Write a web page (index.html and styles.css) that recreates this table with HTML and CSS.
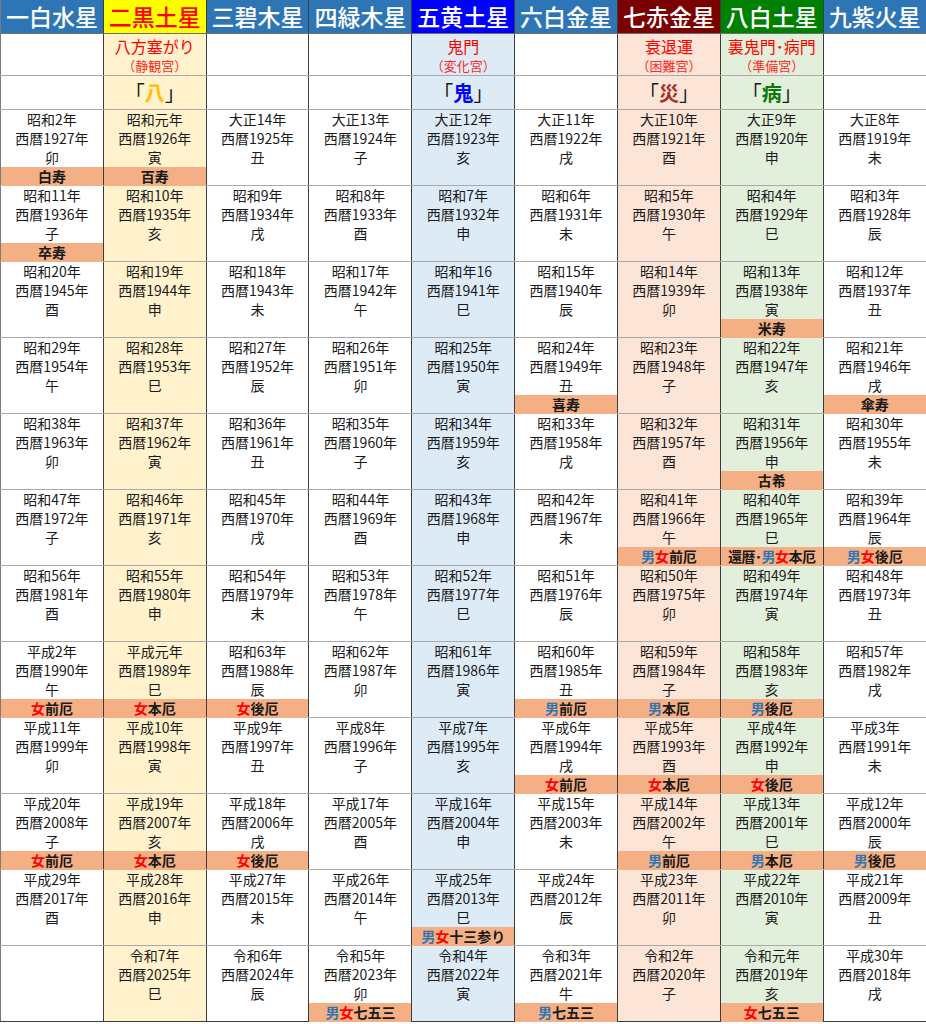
FILE: index.html
```html
<!DOCTYPE html>
<html lang="ja">
<head>
<meta charset="utf-8">
<title>九星早見表</title>
<link rel="stylesheet" href="styles.css">
</head>
<body>
<table class="tbl">
<colgroup><col><col><col><col><col><col><col><col><col></colgroup>
<thead>
<tr class="hrow">
<th class="h"><div class="hc">一白水星</div></th>
<th class="h h2"><div class="hc">二黒土星</div></th>
<th class="h"><div class="hc">三碧木星</div></th>
<th class="h"><div class="hc">四緑木星</div></th>
<th class="h h5"><div class="hc">五黄土星</div></th>
<th class="h"><div class="hc">六白金星</div></th>
<th class="h h7"><div class="hc">七赤金星</div></th>
<th class="h h8"><div class="hc">八白土星</div></th>
<th class="h"><div class="hc">九紫火星</div></th>
</tr>
</thead>
<tbody>
<tr class="lrow">
<td><div class="lc"></div></td>
<td class="c2"><div class="lc"><span class="l1">八方塞がり</span><span class="l2">（静観宮）</span></div></td>
<td><div class="lc"></div></td>
<td><div class="lc"></div></td>
<td class="c5"><div class="lc"><span class="l1">鬼門</span><span class="l2">（変化宮）</span></div></td>
<td><div class="lc"></div></td>
<td class="c7"><div class="lc"><span class="l1">衰退運</span><span class="l2">（困難宮）</span></div></td>
<td class="c8"><div class="lc"><span class="l1">裏鬼門･病門</span><span class="l2">（準備宮）</span></div></td>
<td><div class="lc"></div></td>
</tr>
<tr class="krow">
<td><div class="kc"></div></td>
<td class="c2"><div class="kc">「<b class="k-ha">八</b>」</div></td>
<td><div class="kc"></div></td>
<td><div class="kc"></div></td>
<td class="c5"><div class="kc">「<b class="k-oni">鬼</b>」</div></td>
<td><div class="kc"></div></td>
<td class="c7"><div class="kc">「<b class="k-sai">災</b>」</div></td>
<td class="c8"><div class="kc">「<b class="k-byo">病</b>」</div></td>
<td><div class="kc"></div></td>
</tr>

<tr>
<td><div class="cell"><p>昭和2年<br>西暦1927年<br>卯</p><div class="tag">白寿</div></div></td>
<td class="c2"><div class="cell"><p>昭和元年<br>西暦1926年<br>寅</p><div class="tag">百寿</div></div></td>
<td><div class="cell"><p>大正14年<br>西暦1925年<br>丑</p></div></td>
<td><div class="cell"><p>大正13年<br>西暦1924年<br>子</p></div></td>
<td class="c5"><div class="cell"><p>大正12年<br>西暦1923年<br>亥</p></div></td>
<td><div class="cell"><p>大正11年<br>西暦1922年<br>戌</p></div></td>
<td class="c7"><div class="cell"><p>大正10年<br>西暦1921年<br>酉</p></div></td>
<td class="c8"><div class="cell"><p>大正9年<br>西暦1920年<br>申</p></div></td>
<td><div class="cell"><p>大正8年<br>西暦1919年<br>未</p></div></td>
</tr>

<tr>
<td><div class="cell"><p>昭和11年<br>西暦1936年<br>子</p><div class="tag">卒寿</div></div></td>
<td class="c2"><div class="cell"><p>昭和10年<br>西暦1935年<br>亥</p></div></td>
<td><div class="cell"><p>昭和9年<br>西暦1934年<br>戌</p></div></td>
<td><div class="cell"><p>昭和8年<br>西暦1933年<br>酉</p></div></td>
<td class="c5"><div class="cell"><p>昭和7年<br>西暦1932年<br>申</p></div></td>
<td><div class="cell"><p>昭和6年<br>西暦1931年<br>未</p></div></td>
<td class="c7"><div class="cell"><p>昭和5年<br>西暦1930年<br>午</p></div></td>
<td class="c8"><div class="cell"><p>昭和4年<br>西暦1929年<br>巳</p></div></td>
<td><div class="cell"><p>昭和3年<br>西暦1928年<br>辰</p></div></td>
</tr>

<tr>
<td><div class="cell"><p>昭和20年<br>西暦1945年<br>酉</p></div></td>
<td class="c2"><div class="cell"><p>昭和19年<br>西暦1944年<br>申</p></div></td>
<td><div class="cell"><p>昭和18年<br>西暦1943年<br>未</p></div></td>
<td><div class="cell"><p>昭和17年<br>西暦1942年<br>午</p></div></td>
<td class="c5"><div class="cell"><p>昭和年16<br>西暦1941年<br>巳</p></div></td>
<td><div class="cell"><p>昭和15年<br>西暦1940年<br>辰</p></div></td>
<td class="c7"><div class="cell"><p>昭和14年<br>西暦1939年<br>卯</p></div></td>
<td class="c8"><div class="cell"><p>昭和13年<br>西暦1938年<br>寅</p><div class="tag">米寿</div></div></td>
<td><div class="cell"><p>昭和12年<br>西暦1937年<br>丑</p></div></td>
</tr>

<tr>
<td><div class="cell"><p>昭和29年<br>西暦1954年<br>午</p></div></td>
<td class="c2"><div class="cell"><p>昭和28年<br>西暦1953年<br>巳</p></div></td>
<td><div class="cell"><p>昭和27年<br>西暦1952年<br>辰</p></div></td>
<td><div class="cell"><p>昭和26年<br>西暦1951年<br>卯</p></div></td>
<td class="c5"><div class="cell"><p>昭和25年<br>西暦1950年<br>寅</p></div></td>
<td><div class="cell"><p>昭和24年<br>西暦1949年<br>丑</p><div class="tag">喜寿</div></div></td>
<td class="c7"><div class="cell"><p>昭和23年<br>西暦1948年<br>子</p></div></td>
<td class="c8"><div class="cell"><p>昭和22年<br>西暦1947年<br>亥</p></div></td>
<td><div class="cell"><p>昭和21年<br>西暦1946年<br>戌</p><div class="tag">傘寿</div></div></td>
</tr>

<tr>
<td><div class="cell"><p>昭和38年<br>西暦1963年<br>卯</p></div></td>
<td class="c2"><div class="cell"><p>昭和37年<br>西暦1962年<br>寅</p></div></td>
<td><div class="cell"><p>昭和36年<br>西暦1961年<br>丑</p></div></td>
<td><div class="cell"><p>昭和35年<br>西暦1960年<br>子</p></div></td>
<td class="c5"><div class="cell"><p>昭和34年<br>西暦1959年<br>亥</p></div></td>
<td><div class="cell"><p>昭和33年<br>西暦1958年<br>戌</p></div></td>
<td class="c7"><div class="cell"><p>昭和32年<br>西暦1957年<br>酉</p></div></td>
<td class="c8"><div class="cell"><p>昭和31年<br>西暦1956年<br>申</p><div class="tag">古希</div></div></td>
<td><div class="cell"><p>昭和30年<br>西暦1955年<br>未</p></div></td>
</tr>

<tr>
<td><div class="cell"><p>昭和47年<br>西暦1972年<br>子</p></div></td>
<td class="c2"><div class="cell"><p>昭和46年<br>西暦1971年<br>亥</p></div></td>
<td><div class="cell"><p>昭和45年<br>西暦1970年<br>戌</p></div></td>
<td><div class="cell"><p>昭和44年<br>西暦1969年<br>酉</p></div></td>
<td class="c5"><div class="cell"><p>昭和43年<br>西暦1968年<br>申</p></div></td>
<td><div class="cell"><p>昭和42年<br>西暦1967年<br>未</p></div></td>
<td class="c7"><div class="cell"><p>昭和41年<br>西暦1966年<br>午</p><div class="tag"><span class="m">男</span><span class="f">女</span>前厄</div></div></td>
<td class="c8"><div class="cell"><p>昭和40年<br>西暦1965年<br>巳</p><div class="tag tight">還暦･<span class="m">男</span><span class="f">女</span>本厄</div></div></td>
<td><div class="cell"><p>昭和39年<br>西暦1964年<br>辰</p><div class="tag"><span class="m">男</span><span class="f">女</span>後厄</div></div></td>
</tr>

<tr>
<td><div class="cell"><p>昭和56年<br>西暦1981年<br>酉</p></div></td>
<td class="c2"><div class="cell"><p>昭和55年<br>西暦1980年<br>申</p></div></td>
<td><div class="cell"><p>昭和54年<br>西暦1979年<br>未</p></div></td>
<td><div class="cell"><p>昭和53年<br>西暦1978年<br>午</p></div></td>
<td class="c5"><div class="cell"><p>昭和52年<br>西暦1977年<br>巳</p></div></td>
<td><div class="cell"><p>昭和51年<br>西暦1976年<br>辰</p></div></td>
<td class="c7"><div class="cell"><p>昭和50年<br>西暦1975年<br>卯</p></div></td>
<td class="c8"><div class="cell"><p>昭和49年<br>西暦1974年<br>寅</p></div></td>
<td><div class="cell"><p>昭和48年<br>西暦1973年<br>丑</p></div></td>
</tr>

<tr>
<td><div class="cell"><p>平成2年<br>西暦1990年<br>午</p><div class="tag"><span class="f">女</span>前厄</div></div></td>
<td class="c2"><div class="cell"><p>平成元年<br>西暦1989年<br>巳</p><div class="tag"><span class="f">女</span>本厄</div></div></td>
<td><div class="cell"><p>昭和63年<br>西暦1988年<br>辰</p><div class="tag"><span class="f">女</span>後厄</div></div></td>
<td><div class="cell"><p>昭和62年<br>西暦1987年<br>卯</p></div></td>
<td class="c5"><div class="cell"><p>昭和61年<br>西暦1986年<br>寅</p></div></td>
<td><div class="cell"><p>昭和60年<br>西暦1985年<br>丑</p><div class="tag"><span class="m">男</span>前厄</div></div></td>
<td class="c7"><div class="cell"><p>昭和59年<br>西暦1984年<br>子</p><div class="tag"><span class="m">男</span>本厄</div></div></td>
<td class="c8"><div class="cell"><p>昭和58年<br>西暦1983年<br>亥</p><div class="tag"><span class="m">男</span>後厄</div></div></td>
<td><div class="cell"><p>昭和57年<br>西暦1982年<br>戌</p></div></td>
</tr>

<tr>
<td><div class="cell"><p>平成11年<br>西暦1999年<br>卯</p></div></td>
<td class="c2"><div class="cell"><p>平成10年<br>西暦1998年<br>寅</p></div></td>
<td><div class="cell"><p>平成9年<br>西暦1997年<br>丑</p></div></td>
<td><div class="cell"><p>平成8年<br>西暦1996年<br>子</p></div></td>
<td class="c5"><div class="cell"><p>平成7年<br>西暦1995年<br>亥</p></div></td>
<td><div class="cell"><p>平成6年<br>西暦1994年<br>戌</p><div class="tag"><span class="f">女</span>前厄</div></div></td>
<td class="c7"><div class="cell"><p>平成5年<br>西暦1993年<br>酉</p><div class="tag"><span class="f">女</span>本厄</div></div></td>
<td class="c8"><div class="cell"><p>平成4年<br>西暦1992年<br>申</p><div class="tag"><span class="f">女</span>後厄</div></div></td>
<td><div class="cell"><p>平成3年<br>西暦1991年<br>未</p></div></td>
</tr>

<tr>
<td><div class="cell"><p>平成20年<br>西暦2008年<br>子</p><div class="tag"><span class="f">女</span>前厄</div></div></td>
<td class="c2"><div class="cell"><p>平成19年<br>西暦2007年<br>亥</p><div class="tag"><span class="f">女</span>本厄</div></div></td>
<td><div class="cell"><p>平成18年<br>西暦2006年<br>戌</p><div class="tag"><span class="f">女</span>後厄</div></div></td>
<td><div class="cell"><p>平成17年<br>西暦2005年<br>酉</p></div></td>
<td class="c5"><div class="cell"><p>平成16年<br>西暦2004年<br>申</p></div></td>
<td><div class="cell"><p>平成15年<br>西暦2003年<br>未</p></div></td>
<td class="c7"><div class="cell"><p>平成14年<br>西暦2002年<br>午</p><div class="tag"><span class="m">男</span>前厄</div></div></td>
<td class="c8"><div class="cell"><p>平成13年<br>西暦2001年<br>巳</p><div class="tag"><span class="m">男</span>本厄</div></div></td>
<td><div class="cell"><p>平成12年<br>西暦2000年<br>辰</p><div class="tag"><span class="m">男</span>後厄</div></div></td>
</tr>

<tr>
<td><div class="cell"><p>平成29年<br>西暦2017年<br>酉</p></div></td>
<td class="c2"><div class="cell"><p>平成28年<br>西暦2016年<br>申</p></div></td>
<td><div class="cell"><p>平成27年<br>西暦2015年<br>未</p></div></td>
<td><div class="cell"><p>平成26年<br>西暦2014年<br>午</p></div></td>
<td class="c5"><div class="cell"><p>平成25年<br>西暦2013年<br>巳</p><div class="tag"><span class="m">男</span><span class="f">女</span>十三参り</div></div></td>
<td><div class="cell"><p>平成24年<br>西暦2012年<br>辰</p></div></td>
<td class="c7"><div class="cell"><p>平成23年<br>西暦2011年<br>卯</p></div></td>
<td class="c8"><div class="cell"><p>平成22年<br>西暦2010年<br>寅</p></div></td>
<td><div class="cell"><p>平成21年<br>西暦2009年<br>丑</p></div></td>
</tr>

<tr class="last">
<td><div class="cell"></div></td>
<td class="c2"><div class="cell"><p>令和7年<br>西暦2025年<br>巳</p></div></td>
<td><div class="cell"><p>令和6年<br>西暦2024年<br>辰</p></div></td>
<td><div class="cell"><p>令和5年<br>西暦2023年<br>卯</p><div class="tag"><span class="m">男</span><span class="f">女</span>七五三</div></div></td>
<td class="c5"><div class="cell"><p>令和4年<br>西暦2022年<br>寅</p></div></td>
<td><div class="cell"><p>令和3年<br>西暦2021年<br>牛</p><div class="tag"><span class="m">男</span>七五三</div></div></td>
<td class="c7"><div class="cell"><p>令和2年<br>西暦2020年<br>子</p></div></td>
<td class="c8"><div class="cell"><p>令和元年<br>西暦2019年<br>亥</p><div class="tag"><span class="f">女</span>七五三</div></div></td>
<td><div class="cell"><p>平成30年<br>西暦2018年<br>戌</p></div></td>
</tr>
</tbody>
</table>
</body>
</html>
```

FILE: styles.css
```css
html, body {
  margin: 0;
  padding: 0;
  background: #ffffff;
}
body {
  font-family: "Noto Sans CJK JP", "Noto Sans", sans-serif;
  color: #1a1a1a;
}
.tbl {
  border-collapse: collapse;
  table-layout: fixed;
  width: 926px;
}
.tbl th, .tbl td {
  padding: 0;
  text-align: center;
  vertical-align: top;
  border-left: 1px solid #3c3c3c;
  border-right: 1px solid #3c3c3c;
}
.tbl th:first-child, .tbl td:first-child {
  border-left: 1px solid #7a7a7a;
}
.tbl th:last-child, .tbl td:last-child {
  border-right: none;
}

/* header */
.h {
  background: #2e75b6;
  color: #ffffff;
  border-bottom: 1px solid #6f6f6f;
}
.hc {
  height: 33px;
  line-height: 33px;
  font-size: 23px;
  font-weight: 500;
  white-space: nowrap;
}
.h2 { background: #ffff00; color: #ff0000; }
.h5 { background: #0000ff; color: #ffffff; }
.h7 { background: #7b0000; color: #ffffff; }
.h8 { background: #008000; color: #ffffff; }

/* column tints */
.c2 { background: #fff2cc; }
.c5 { background: #ddebf7; }
.c7 { background: #fce4d6; }
.c8 { background: #e2efda; }

/* label row */
.lrow td { border-bottom: 1px solid #bdbdbd; }
.lc {
  height: 41px;
  padding-top: 2px;
  box-sizing: border-box;
  display: flex;
  flex-direction: column;
  align-items: center;
  color: #ff0000;
}
.l1 {
  font-size: 16px;
  line-height: 21px;
  white-space: nowrap;
}
.l2 {
  font-size: 13px;
  line-height: 18px;
  color: #ff2a2a;
  white-space: nowrap;
}

/* kanji row */
.krow td { border-bottom: 1px solid #000000; }
.kc {
  height: 33px;
  line-height: 33px;
  font-size: 20px;
  color: #1a1a1a;
  white-space: nowrap;
}
.kc b { font-weight: 700; }
.k-ha { color: #ffc000; }
.k-oni { color: #0000ff; }
.k-sai { color: #a8302a; }
.k-byo { color: #0a7a0a; }

/* data rows */
.tbl tbody tr td { border-bottom: 1px solid #a9a9a9; }
.tbl tbody tr.last td { border-bottom: 1px solid #3c3c3c; }
.cell {
  height: 75px;
  display: flex;
  flex-direction: column;
}
.cell p {
  margin: 0;
  font-size: 14px;
  line-height: 19px;
  white-space: nowrap;
}
.tag {
  margin-top: auto;
  height: 19px;
  line-height: 19px;
  background: #f4b084;
  font-size: 14px;
  font-weight: 700;
  color: #1a1a1a;
  white-space: nowrap;
}
.tag.tight { letter-spacing: -0.5px; }
.m { color: #2e75b6; }
.f { color: #ff0000; }
```
